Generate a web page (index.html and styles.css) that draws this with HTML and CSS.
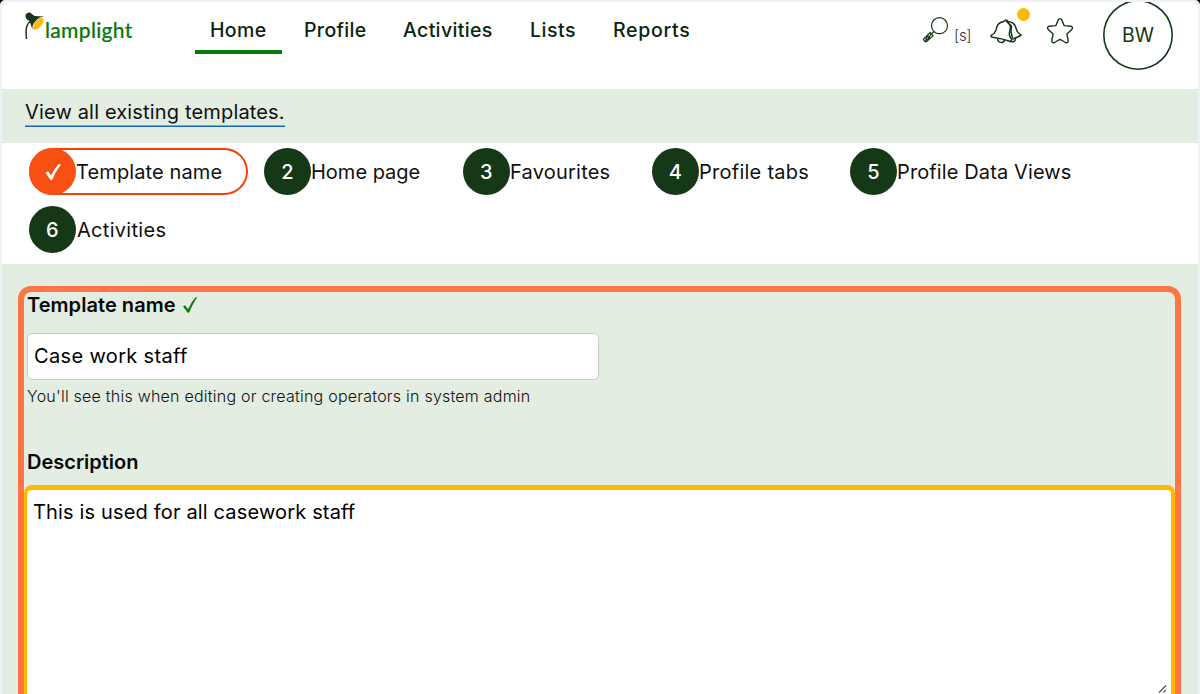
FILE: index.html
```html
<!DOCTYPE html>
<html lang="en">
<head>
<meta charset="utf-8">
<title>Lamplight - Template</title>
<link rel="stylesheet" href="styles.css">
</head>
<body>
<div class="frame">
<div class="page">
  <header class="header">
    <a class="logo">
      <svg class="lamp" width="22" height="28" viewBox="0 0 22 28">
        <path d="M2.600 28C1.400 20 1.500 14 6 10.500" fill="none" stroke="#153816" stroke-width="1.500"/>
        <path d="M1.500 4Q2.500 1 6 1.500L10.500 5L19.500 5.500Q11 8 8.500 18.500L5.500 10Q1 8 1.500 4Z" fill="#153816"/>
        <ellipse cx="14.300" cy="12.800" rx="7.600" ry="3.700" transform="rotate(-50 14.300 12.800)" fill="#ffb90a" stroke="#fff" stroke-width=".6"/>
      </svg>
      <span class="wordmark">lamplight</span>
    </a>
    <nav class="nav">
      <a class="nav-item active w-home">Home</a>
      <a class="nav-item w-profile">Profile</a>
      <a class="nav-item w-activities">Activities</a>
      <a class="nav-item w-lists">Lists</a>
      <a class="nav-item w-reports">Reports</a>
    </nav>
    <div class="tools">
      <svg class="search" width="28" height="28" viewBox="0 0 28 28" fill="none" stroke="#153816" stroke-width="1.200">
        <circle cx="17.500" cy="9.700" r="8"/>
        <path d="M12 15.500L9.300 18M8 16.500L11 19.700L4.500 25.700Q2.500 26 1.300 23.300ZM3 21.500L6 24.500M5 19.500L8 22.700M6.500 18L3.500 25M9 18L5 25"/>
      </svg>
      <span class="shortcut">[s]</span>
      <div class="bell">
        <svg width="32" height="28" viewBox="0 0 32 28" fill="none" stroke="#153816" stroke-width="1.500" stroke-linejoin="round">
          <path d="M14 4.500Q16 1.500 18 4.500Q24.500 5 26 11Q27 16 31 18Q30 19.500 22.500 22"/>
          <path d="M14 4.500Q7.500 5.500 6.500 11Q5.800 16 1 18.500L1.500 20Q12 21.500 20.500 24.500L22 22.500Q18 19 20 13Q21.500 8 17 4.500"/>
          <path d="M7.500 21.500Q8 25.500 11.500 25.500Q14 25.500 14.500 23M20.500 24.500Q25 26 25.500 21.500M16 4L21.500 9L21 15L22.500 21"/>
        </svg>
        <i class="dot"></i>
      </div>
      <svg class="star" width="28" height="28" viewBox="0 0 28 28" fill="none" stroke="#153816" stroke-width="1.400" stroke-linejoin="round">
        <path d="M12.200 3Q14 .2 15.800 3L18.200 8.600L24.500 9.300Q27.800 10 25.700 12.500L20.900 17L22.200 23.500Q22.300 26.500 19.600 25.500L14 22.400L8.400 25.500Q5.700 26.500 5.800 23.500L7.100 17L2.300 12.500Q.2 10 3.500 9.300L9.800 8.600Z"/>
      </svg>
      <div class="avatar">BW</div>
    </div>
  </header>
  <div class="strip"><a class="view-all">View all existing templates.</a></div>
  <ol class="steps">
    <li class="step current s1"><b class="num"><svg width="18" height="20" viewBox="0 0 18 20"><path d="M1.500 10.800L4 9.300L7 13.500Q10 6.500 14.800 2L16.800 2.700Q11.500 9 8.200 18H6.500Z" fill="#fff"/></svg></b><span class="label">Template name</span></li>
    <li class="step s2"><b class="num">2</b><span class="label">Home page</span></li>
    <li class="step s3"><b class="num">3</b><span class="label">Favourites</span></li>
    <li class="step s4"><b class="num">4</b><span class="label">Profile tabs</span></li>
    <li class="step s5"><b class="num">5</b><span class="label">Profile Data Views</span></li>
    <li class="step s6"><b class="num">6</b><span class="label">Activities</span></li>
  </ol>
  <main class="main">
    <div class="highlight">
      <div class="title first"><span>Template name</span><svg width="16" height="18" viewBox="0 0 16 18"><path d="M1 10.500L3 9.200L6 13.200Q9.500 5.500 14 1L15 1.400Q10.500 8 7 16.800H5.800Z" fill="#0b780b"/></svg></div>
      <div class="input">Case work staff</div>
      <p class="hint">You'll see this when editing or creating operators in system admin</p>
      <div class="title second">Description</div>
      <div class="textarea">This is used for all casework staff
        <svg class="grip" width="10" height="10" viewBox="0 0 10 10" stroke="#555" stroke-width="1.300"><path d="M1 8.500L8 1.500M5.500 8.500L8 6"/></svg>
      </div>
    </div>
  </main>
</div>
</div>
</body>
</html>
```
FILE: styles.css
```css
* { box-sizing: border-box; }
body { margin: 0; background: #000; font-family: Inter, "Liberation Sans", sans-serif; color: #101010; overflow: hidden; }
.frame { height: 694px; padding: 2px 2px 1px; background: #f2f1f7; border-radius: 5px 5px 0 0; }
.page { height: 692px; background: #fff; border-radius: 8px 8px 0 0; overflow: hidden; display: flex; flex-direction: column; }
.header { height: 87px; flex: none; display: flex; align-items: flex-start; }
.logo { display: flex; width: 193px; padding: 9px 0 0 22px; }
.lamp { flex: none; }
.wordmark { color: #0b780b; font: 500 21px/26px Lato, sans-serif; letter-spacing: .3px; margin: 6px 0 0 -1px; white-space: nowrap; -webkit-text-stroke: .2px #0b780b; }
.nav { display: flex; gap: 7px; width: 727px; }
.nav-item { height: 52px; padding: 15px 0 0 15px; font-size: 19.500px; line-height: 26px; font-weight: 500; letter-spacing: .35px; color: #0b240c; white-space: nowrap; }
.nav-item.active { border-bottom: 4px solid #0b780b; }
.w-home { width: 87px; }
.w-profile { width: 92px; }
.w-activities { width: 120px; }
.w-lists { width: 76px; letter-spacing: .55px; }
.w-reports { width: 108px; letter-spacing: .7px; }
.tools { display: flex; align-items: flex-start; }
.search { margin-top: 14px; }
.shortcut { font-size: 15px; line-height: 20px; font-weight: 300; letter-spacing: -.3px; color: #333; width: 16px; margin: 24px 20px 0 4px; white-space: nowrap; }
.bell { position: relative; width: 32px; height: 28px; margin: 15px 24px 0 0; }
.dot { position: absolute; left: 27px; top: -9px; width: 13px; height: 13px; border-radius: 50%; background: #ffb900; }
.star { margin: 15px 29px 0 0; }
.avatar { width: 70px; height: 70px; margin-top: -2px; box-shadow: inset 0 0 0 1.600px #153816; border-radius: 50%; text-align: center; font-size: 19.500px; line-height: 71px; font-weight: 400; color: #153816; }
.strip { height: 54px; flex: none; background: #e3ede1; padding: 10px 0 0 23px; }
.view-all { display: block; width: 260px; height: 28px; box-shadow: inset 0 -1.500px #1565b5; font-size: 20px; line-height: 26px; font-weight: 400; letter-spacing: .16px; white-space: nowrap; }
.steps { list-style: none; margin: 0; padding: 5px 0 0 27px; height: 121px; flex: none; display: flex; flex-wrap: wrap; align-content: flex-start; gap: 11px 16px; }
.step { display: flex; height: 47px; border-radius: 24px; font-size: 20px; line-height: 49px; font-weight: 400; letter-spacing: .12px; white-space: nowrap; }
.current { box-shadow: inset 0 0 0 2px #f83f05; }
.num { width: 47px; height: 47px; border-radius: 50%; background: #153816; color: #fff; text-align: center; font-weight: 500; flex: none; }
.current .num { background: #f84f12; display: flex; align-items: center; justify-content: center; }
.s1 { width: 219px; }
.s2 { width: 183px; letter-spacing: 0; }
.s3 { width: 173px; letter-spacing: .22px; }
.s4 { width: 182px; letter-spacing: .26px; }
.s5 { width: 250px; }
.s6 { width: 183px; letter-spacing: .3px; line-height: 48px; }
.s6 .num { margin-right: 1px; }
.main { flex: 1; min-height: 0; background: #e3ede1; padding: 22px 17px 0 16px; }
.highlight { height: 450px; border: 6px solid #ff7545; border-bottom: 0; border-radius: 13px 13px 0 0; }
.title { display: flex; gap: 6px; align-items: center; height: 28px; padding-left: 3px; font-size: 20px; line-height: 28px; font-weight: 600; color: #080808; white-space: nowrap; }
.first { line-height: 27px; letter-spacing: .05px; align-items: flex-start; }
.first svg { margin-top: 4px; }
.input { width: 572px; height: 47px; margin: 13px 0 0 3px; background: #fff; border: 1.500px solid #ccc; border-radius: 5px; padding-left: 6px; font-size: 20px; line-height: 45px; font-weight: 400; letter-spacing: .35px; color: #000; }
.hint { margin: 3px 0 0 3px; font-size: 16px; line-height: 26px; font-weight: 300; letter-spacing: .23px; white-space: nowrap; }
.second { margin-top: 39px; }
.textarea { position: relative; height: 230px; margin-top: 9px; background: #fff; border: 4px solid #ffb900; border-width: 5px 4px 0 3px; border-radius: 8px 8px 0 0; padding: 8px 0 0 6px; font-size: 20px; line-height: 28px; font-weight: 400; letter-spacing: .16px; color: #000; }
.grip { position: absolute; right: 3px; top: 194px; }
```
